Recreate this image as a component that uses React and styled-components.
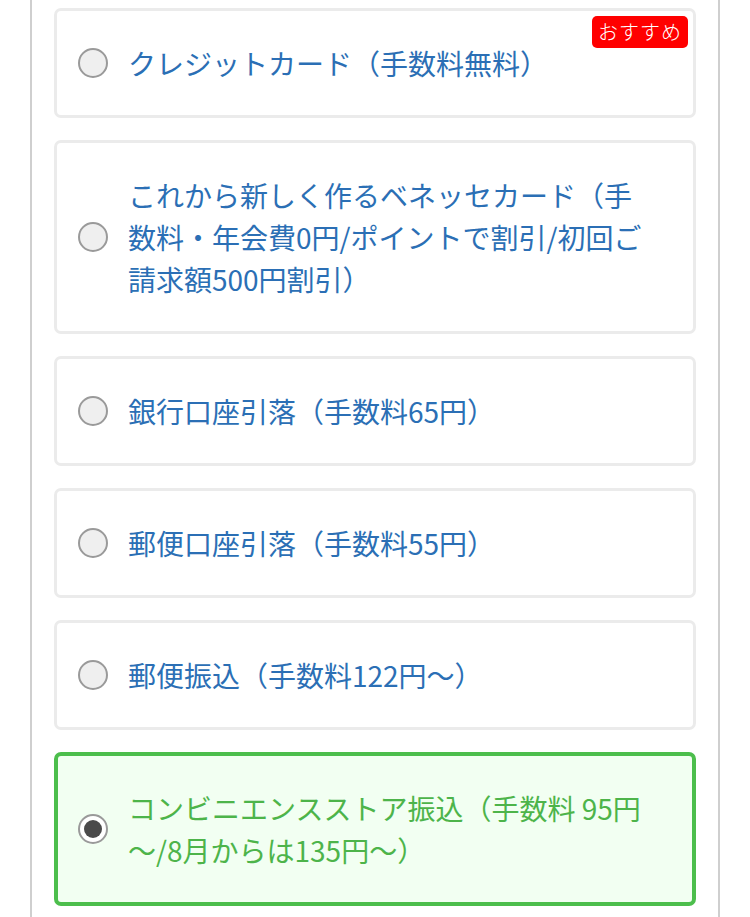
import React from 'react'
import styled, { createGlobalStyle } from 'styled-components'

const GlobalStyle = createGlobalStyle`
  html, body {
    margin: 0;
    padding: 0;
    background: #ffffff;
    font-family: "Noto Sans CJK JP", "Noto Sans", sans-serif;
  }
`;

const Panel = styled.div`
  margin: 0 30px 0 30px;
  min-height: 940px;
  border-left: 2px solid #cfcfcf;
  border-right: 2px solid #cfcfcf;
  padding: 8px 22px 40px;
  display: flex;
  flex-direction: column;
  gap: 22px;
`;

const Option = styled.label`
  position: relative;
  display: flex;
  align-items: center;
  gap: 20px;
  padding: 31px 40px 31px ${({ $selected }) => ($selected ? '20px' : '21px')};
  border: ${({ $selected }) => ($selected ? '4px solid #4cbe4c' : '3px solid #ebebeb')};
  border-radius: 7px;
  background: ${({ $selected }) => ($selected ? '#f2fff2' : '#ffffff')};
  cursor: pointer;
`;

const Radio = styled.span`
  flex: 0 0 auto;
  width: 30px;
  height: 30px;
  box-sizing: border-box;
  border-radius: 50%;
  border: 2px solid #9a9a9a;
  background: ${({ $checked }) => ($checked ? '#ffffff' : '#efefef')};
  display: flex;
  align-items: center;
  justify-content: center;
  &::after {
    content: '';
    display: ${({ $checked }) => ($checked ? 'block' : 'none')};
    width: 18px;
    height: 18px;
    border-radius: 50%;
    background: #4a4a4a;
  }
`;

const Label = styled.span`
  flex: 1;
  font-size: 28px;
  font-weight: 400;
  line-height: 42px;
  color: ${({ $selected }) => ($selected ? '#4db44a' : '#2b6fb5')};
`;

const Badge = styled.span`
  position: absolute;
  top: 5px;
  right: 5px;
  width: 96px;
  height: 32px;
  border-radius: 5px;
  background: #ff0000;
  color: #ffffff;
  font-size: 20px;
  font-weight: 300;
  line-height: 32px;
  text-align: center;
  letter-spacing: 1px;
`;

const options = [
  { label: 'クレジットカード（手数料無料）', badge: 'おすすめ' },
  { label: 'これから新しく作るベネッセカード（手数料・年会費0円/ポイントで割引/初回ご請求額500円割引）' },
  { label: '銀行口座引落（手数料65円）' },
  { label: '郵便口座引落（手数料55円）' },
  { label: '郵便振込（手数料122円～）' },
  { label: 'コンビニエンスストア振込（手数料 95円～/8月からは135円～）', selected: true },
];

const App = () => {
  return (
    <>
      <GlobalStyle />
      <Panel>
        {options.map((o) => (
          <Option key={o.label} $selected={o.selected}>
            <Radio $checked={o.selected} />
            <Label $selected={o.selected}>{o.label}</Label>
            {o.badge && <Badge>{o.badge}</Badge>}
          </Option>
        ))}
      </Panel>
    </>
  )
}

export default App
